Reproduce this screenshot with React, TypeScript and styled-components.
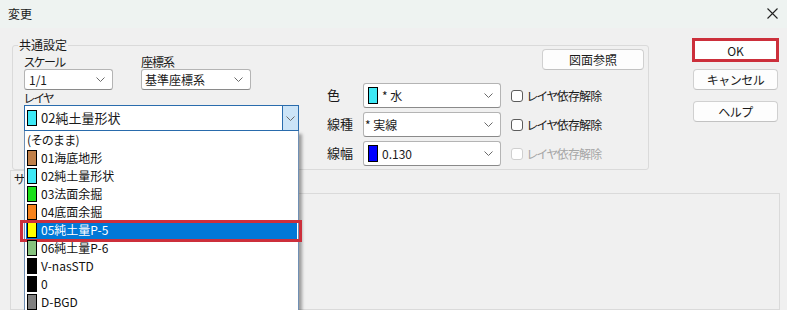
import React from "react";
import styled, { createGlobalStyle } from "styled-components";

const Global = createGlobalStyle`
  html, body { margin: 0; padding: 0; background: #f0f0f0; }
  body {
    font-family: "Noto Sans CJK JP", "Noto Sans", sans-serif;
    font-size: 12px;
    color: #1a1a1a;
    font-feature-settings: "palt" 1;
    font-kerning: normal;
  }
  * { box-sizing: border-box; }
`;

const Window = styled.div`
  width: 787px;
  height: 310px;
  overflow: hidden;
  background: #f0f0f0;
  display: flex;
  flex-direction: column;
`;

const TitleBar = styled.div`
  height: 28px;
  flex: none;
  display: flex;
  align-items: center;
  justify-content: space-between;
  padding: 0 9px 2px 8px;
  background: #eef3f1;
  font-size: 12px;
`;

const Body = styled.div`
  flex: 1;
  display: flex;
  flex-direction: column;
  padding: 10px 7px 0 10px;
  min-height: 0;
`;

const TopRow = styled.div`
  display: flex;
  align-items: flex-start;
  padding-left: 2px;
  position: relative;
  z-index: 2;
`;

const Group = styled.div`
  position: relative;
  margin-top: 7px;
  width: 637px;
  height: 125px;
  border: 1px solid #dadada;
  border-radius: 3px;
  display: flex;
  gap: 28px;
  padding: 0 4px 0 11px;
`;

const Legend = styled.span`
  position: absolute;
  top: -9px;
  left: 5px;
  padding: 0 1px;
  background: #f0f0f0;
  line-height: 16px;
`;

const LeftCol = styled.div`
  width: 275px;
  padding-top: 9px;
  display: flex;
  flex-direction: column;
`;

const FieldRow = styled.div`
  display: flex;
  gap: 28px;
`;

const Field = styled.div<{ $w: number }>`
  position: relative;
  width: ${(p) => p.$w}px;
  display: flex;
  flex-direction: column;
`;

const Label = styled.div<{ $mt?: number }>`
  height: 14px;
  line-height: 14px;
  margin-top: ${(p) => p.$mt ?? 0}px;
  white-space: nowrap;
  letter-spacing: -1px;
`;

const Combo = styled.div<{ $h: number; $focus?: boolean; $pl?: number }>`
  height: ${(p) => p.$h}px;
  background: #fff;
  border: 1px solid ${(p) => (p.$focus ? "#2a6cad" : "#b4b4b4")};
  border-bottom-color: ${(p) => (p.$focus ? "#2a6cad" : "#8a8a8a")};
  border-radius: ${(p) => (p.$focus ? 0 : 3)}px;
  display: flex;
  align-items: center;
  padding-left: ${(p) => p.$pl ?? 4}px;
  white-space: nowrap;
  font-size: 12px;
`;

const ComboText = styled.span<{ $fs?: number }>`
  flex: 1;
  line-height: 16px;
  font-size: ${(p) => p.$fs ?? 12}px;
`;

const Chevron = styled.span`
  width: 20px;
  display: flex;
  justify-content: center;
  align-items: center;
  margin-right: 2px;
`;

const DropButton = styled.span`
  width: 16px;
  align-self: stretch;
  background: #cce4f7;
  border-left: 1px solid #2a6cad;
  display: flex;
  justify-content: center;
  align-items: center;
`;

const Swatch = styled.span<{ $c: string; $w?: number; $h?: number }>`
  display: inline-block;
  flex: none;
  width: ${(p) => p.$w ?? 10}px;
  height: ${(p) => p.$h ?? 16}px;
  background: ${(p) => p.$c};
  border: 1px solid #000;
  margin-right: 4px;
`;

const List = styled.div`
  position: absolute;
  top: 100%;
  left: 0;
  width: 275px;
  background: #fff;
  border: 1px solid #6f8fb4;
  border-top: none;
  padding-left: 1px;
  box-shadow: 3px 3px 3px rgba(0, 0, 0, 0.35);
  z-index: 10;
`;

const Item = styled.div<{ $sel?: boolean }>`
  position: relative;
  height: 18px;
  display: flex;
  align-items: center;
  padding-left: 1px;
  margin-right: 1px;
  background: ${(p) => (p.$sel ? "#0078d7" : "transparent")};
  color: ${(p) => (p.$sel ? "#fff" : "#111")};
  white-space: nowrap;
  line-height: 16px;
`;

const Highlight = styled.span`
  position: absolute;
  left: -6px;
  right: -5px;
  top: -1px;
  bottom: -3px;
  border: 3px solid #cc2f3b;
  pointer-events: none;
`;

const RightCol = styled.div`
  flex: 1;
  padding-top: 3px;
  display: flex;
  flex-direction: column;
`;

const Button = styled.button<{ $w?: number }>`
  width: ${(p) => (p.$w ? `${p.$w}px` : "100%")};
  height: 21px;
  background: #fdfdfd;
  border: 1px solid #d0d0d0;
  border-bottom-color: #c2c2c2;
  border-radius: 4px;
  font-family: inherit;
  font-size: 12px;
  color: #1a1a1a;
  padding: 0;
  line-height: 16px;
`;

const RefButton = styled(Button)`
  align-self: flex-end;
`;

const OkButton = styled.button`
  width: 87px;
  height: 24px;
  background: #fff;
  border: 3px solid #cc2f3b;
  font-family: inherit;
  font-size: 12px;
  font-weight: 400;
  color: #1a1a1a;
  padding: 0;
  margin-bottom: 7px;
`;

const PropGrid = styled.div`
  margin-top: 13px;
  display: grid;
  grid-template-columns: 36px 138px auto;
  grid-auto-rows: 25px;
  row-gap: 4px;
  align-items: center;
`;

const PropLabel = styled.div`
  font-size: 13px;
  line-height: 16px;
  padding-bottom: 2px;
`;

const Check = styled.label<{ $disabled?: boolean }>`
  display: flex;
  align-items: center;
  margin-left: 10px;
  gap: 4px;
  color: ${(p) => (p.$disabled ? "#a6a6a6" : "#1a1a1a")};
  white-space: nowrap;
  line-height: 16px;
  letter-spacing: -0.8px;
`;

const CheckBox = styled.span<{ $disabled?: boolean }>`
  width: 12px;
  height: 12px;
  border: 1px solid ${(p) => (p.$disabled ? "#cfcfcf" : "#5c5c5c")};
  border-radius: 3px;
  background: #fff;
`;

const ButtonCol = styled.div`
  margin-left: 43px;
  width: 87px;
  display: flex;
  flex-direction: column;
  align-items: center;
`;

const SideButton = styled(Button)<{ $mb?: number }>`
  width: 85px;
  margin-bottom: ${(p) => p.$mb ?? 0}px;
  letter-spacing: -0.5px;
`;

const TabHeader = styled.div`
  width: 16px;
  height: 24px;
  border: 1px solid #dadada;
  border-bottom: none;
  border-right: none;
  padding: 1px 0 0 3px;
  line-height: 14px;
  background: #f0f0f0;
  white-space: nowrap;
  position: relative;
  z-index: 1;
`;

const TabPanel = styled.div`
  flex: 1;
  margin-top: -1px;
  border: 1px solid #dadada;
  background: #f0f0f0;
`;

const ChevronIcon = () => (
  <svg width="9" height="5" viewBox="0 0 9 5">
    <polyline points="0.5,0.5 4.5,4.5 8.5,0.5" fill="none" stroke="#6a6a6a" strokeWidth="1" />
  </svg>
);

const CloseIcon = () => (
  <svg width="11" height="11" viewBox="0 0 11 11">
    <path d="M0.5 0.5 L10.5 10.5 M10.5 0.5 L0.5 10.5" stroke="#222" strokeWidth="1.1" />
  </svg>
);

const layers: { name: string; color?: string }[] = [
  { name: "(そのまま)" },
  { name: "01海底地形", color: "#c0804a" },
  { name: "02純土量形状", color: "#3ee8f5" },
  { name: "03法面余掘", color: "#1be01b" },
  { name: "04底面余掘", color: "#f7831e" },
  { name: "05純土量P-5", color: "#ffff00" },
  { name: "06純土量P-6", color: "#86c27e" },
  { name: "V-nasSTD", color: "#000" },
  { name: "0", color: "#000" },
  { name: "D-BGD", color: "#808080" },
];

const props = [
  { label: "色", swatch: "#3ee8f5", text: "* 水", disabled: false },
  { label: "線種", text: "* 実線", disabled: false },
  { label: "線幅", swatch: "#0000ff", text: "0.130", disabled: true },
];

export default function App() {
  return (
    <>
      <Global />
      <Window>
        <TitleBar>
          <span>変更</span>
          <CloseIcon />
        </TitleBar>
        <Body>
          <TopRow>
            <Group>
              <Legend>共通設定</Legend>
              <LeftCol>
                <FieldRow>
                  <Field $w={89}>
                    <Label>スケール</Label>
                    <Combo $h={21}>
                      <ComboText>1/1</ComboText>
                      <Chevron>
                        <ChevronIcon />
                      </Chevron>
                    </Combo>
                  </Field>
                  <Field $w={110}>
                    <Label>座標系</Label>
                    <Combo $h={21} $pl={3}>
                      <ComboText>基準座標系</ComboText>
                      <Chevron>
                        <ChevronIcon />
                      </Chevron>
                    </Combo>
                  </Field>
                </FieldRow>
                <Field $w={275}>
                  <Label $mt={1}>レイヤ</Label>
                  <Combo $h={26} $focus $pl={2}>
                    <Swatch $c="#3ee8f5" $h={16} />
                    <ComboText $fs={13}>02純土量形状</ComboText>
                    <DropButton>
                      <ChevronIcon />
                    </DropButton>
                  </Combo>
                  <List>
                    {layers.map((l, i) => (
                      <Item key={l.name} $sel={i === 5}>
                        {l.color && <Swatch $c={l.color} $h={16} />}
                        {l.name}
                        {i === 5 && <Highlight />}
                      </Item>
                    ))}
                  </List>
                </Field>
              </LeftCol>
              <RightCol>
                <RefButton $w={102}>図面参照</RefButton>
                <PropGrid>
                  {props.map((p) => (
                    <React.Fragment key={p.label}>
                      <PropLabel>{p.label}</PropLabel>
                      <Combo $h={25} $pl={p.swatch ? 4 : 1}>
                        {p.swatch && <Swatch $c={p.swatch} $w={10} $h={17} />}
                        <ComboText>{p.text}</ComboText>
                        <Chevron>
                          <ChevronIcon />
                        </Chevron>
                      </Combo>
                      <Check $disabled={p.disabled}>
                        <CheckBox $disabled={p.disabled} />
                        レイヤ依存解除
                      </Check>
                    </React.Fragment>
                  ))}
                </PropGrid>
              </RightCol>
            </Group>
            <ButtonCol>
              <OkButton>OK</OkButton>
              <SideButton $mb={11}>キャンセル</SideButton>
              <SideButton>ヘルプ</SideButton>
            </ButtonCol>
          </TopRow>
          <TabHeader>サ</TabHeader>
          <TabPanel />
        </Body>
      </Window>
    </>
  );
}
